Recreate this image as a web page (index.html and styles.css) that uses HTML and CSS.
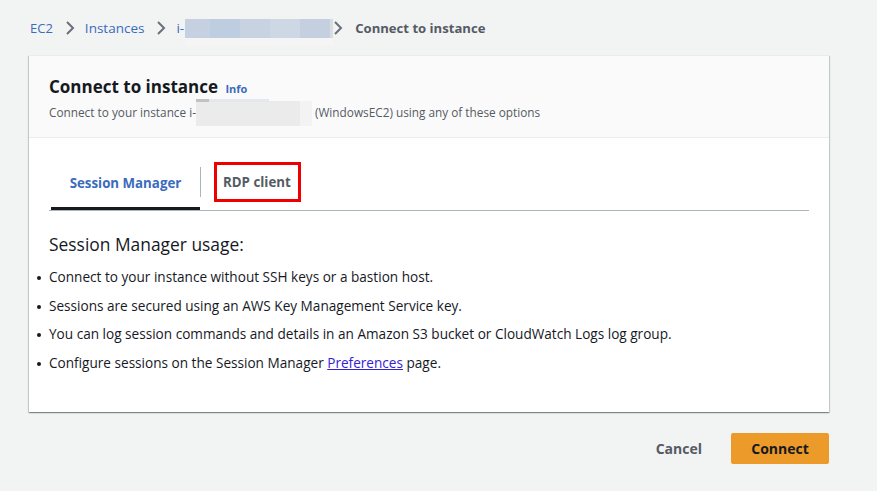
FILE: index.html
```html
<!DOCTYPE html>
<html lang="en">
<head>
<meta charset="utf-8">
<title>Connect to instance</title>
<link rel="stylesheet" href="styles.css">
</head>
<body>
<nav class="crumbs">
  <a class="crumb-link crumb-ec2" href="#">EC2</a>
  <svg class="chev" viewBox="0 0 10 16" width="10" height="16"><path d="M2 2l6 6-6 6" fill="none" stroke="#687078" stroke-width="2"/></svg>
  <a class="crumb-link" href="#">Instances</a>
  <svg class="chev" viewBox="0 0 10 16" width="10" height="16"><path d="M2 2l6 6-6 6" fill="none" stroke="#687078" stroke-width="2"/></svg>
  <span class="crumb-id"><a class="crumb-link" href="#">i-</a><span class="blur-wrap"><span class="blur-id"><i class="c1"></i><i class="c2"></i><i class="c3"></i><i class="c4"></i><i class="c5"></i><i class="c6"></i></span><span class="blur-under"></span></span></span>
  <svg class="chev chev-last" viewBox="0 0 10 16" width="10" height="16"><path d="M2 2l6 6-6 6" fill="none" stroke="#687078" stroke-width="2"/></svg>
  <span class="crumb-current">Connect to instance</span>
</nav>

<main class="card">
  <header class="card-head">
    <h1 class="title">Connect to instance <a class="info" href="#">Info</a></h1>
    <p class="subtitle">Connect to your instance i-<span class="blur-sub"><span class="blur-sub-top"></span><span class="blur-sub-end"></span></span>(WindowsEC2) using any of these options</p>
  </header>
  <section class="card-body">
    <div class="tabs">
      <div class="tab tab-active">Session Manager</div>
      <div class="tab-sep"></div>
      <div class="tab tab-rdp"><span class="highlight">RDP client</span></div>
    </div>
    <h2 class="usage">Session Manager usage:</h2>
    <ul class="list">
      <li>Connect to your instance without SSH keys or a bastion host.</li>
      <li>Sessions are secured using an AWS Key Management Service key.</li>
      <li>You can log session commands and details in an Amazon S3 bucket or CloudWatch Logs log group.</li>
      <li>Configure sessions on the Session Manager <a class="pref" href="#">Preferences</a> page.</li>
    </ul>
  </section>
</main>

<footer class="actions">
  <button class="btn-cancel">Cancel</button>
  <button class="btn-connect">Connect</button>
</footer>
</body>
</html>
```
FILE: styles.css
```css
* { box-sizing: border-box; }
html, body { margin: 0; padding: 0; }
body {
  background: #f2f3f3;
  font-family: "Open Sans", "Noto Sans", sans-serif;
  color: #16191f;
  width: 877px;
  height: 491px;
  overflow: hidden;
}
a { text-decoration: none; }

.crumbs {
  display: flex;
  align-items: center;
  height: 55px;
  padding: 1px 0 0 30px;
  font-size: 13.5px;
}
.crumb-link { color: #3a6bbd; }
.crumb-ec2 { font-size: 13px; }
.chev { margin: 0 10px 0 12px; }
.chev-last { margin: 0 12px 0 0; }
.crumb-id { display: flex; align-items: center; }
.blur-wrap { position: relative; width: 148px; height: 19px; margin-left: 1px; }
.blur-id { display: flex; width: 148px; height: 19px; }
.blur-id i { display: block; height: 100%; }
.c1 { width: 25px; background: #c5d0e0; }
.c2 { width: 30px; background: #bfcde0; }
.c3 { width: 30px; background: #c8d3e2; }
.c4 { width: 30px; background: #ced8e5; }
.c5 { width: 30px; background: #c4cfe0; }
.c6 { width: 3px; background: #d9dde2; }
.blur-under { position: absolute; left: 0; top: 19px; width: 148px; height: 8px; background: #f5f5f5; }
.crumb-current { color: #545b64; font-weight: 700; font-size: 13.1px; }

.card {
  margin: 0 0 0 29px;
  width: 800px;
  height: 357px;
  background: #fff;
  border-top: 1px solid #e9ebed;
  box-shadow: 0 1px 1px 0 rgba(0,28,36,.3), 1px 1px 1px 0 rgba(0,28,36,.15), -1px 1px 1px 0 rgba(0,28,36,.15);
}
.card-head {
  background: #fafafa;
  border-bottom: 1px solid #eaeded;
  height: 82px;
  padding: 18px 20px 0 20px;
}
.title {
  margin: 0;
  font-size: 17px;
  font-weight: 700;
  line-height: 26px;
  color: #16191f;
}
.info {
  font-size: 11px;
  font-weight: 700;
  color: #3a6bbd;
  margin-left: 3px;
}
.subtitle {
  margin: 1px 0 0 0;
  font-size: 11.8px;
  line-height: 18px;
  color: #545b64;
}
.blur-sub {
  display: inline-block;
  position: relative;
  vertical-align: middle;
  width: 104px;
  height: 25px;
  margin: -4px 15px -3px 0;
  background: #ebebeb;
}
.blur-sub-top {
  position: absolute;
  left: 0; top: -2px;
  width: 73px; height: 3px;
  background: linear-gradient(90deg, #c2c2c2 0 13px, #e4e7ec 13px);
}
.blur-sub-end {
  position: absolute;
  right: -12px; top: 0;
  width: 12px; height: 25px;
  background: #f3f3f3;
}

.card-body { padding: 22px 20px 0 20px; }
.tabs {
  display: flex;
  align-items: center;
  height: 51px;
  border-bottom: 1px solid #aab7b8;
}
.tab {
  font-size: 13.3px;
  font-weight: 700;
  height: 50px;
  display: flex;
  align-items: center;
  align-self: flex-start;
}
.tab-active {
  color: #3a6bbd;
  margin-left: 2px;
  width: 149px;
  justify-content: center;
  border-bottom: 3px solid #16191f;
  padding-bottom: 2px;
}
.tab-sep { width: 1px; height: 30px; background: #aab7b8; margin-bottom: 6px; }
.tab-rdp { color: #545b64; margin-left: 13px; padding-bottom: 6px; }
.highlight {
  display: flex;
  align-items: center;
  border: 3px solid #ee0000;
  height: 40px;
  padding: 0 7px 0 6px;
}

.usage {
  margin: 21px 0 0 0;
  font-size: 17.4px;
  font-weight: 400;
  line-height: 24px;
}
.list {
  margin: 11px 0 0 0;
  padding: 0;
  list-style: none;
  font-size: 13.6px;
}
.list li {
  position: relative;
  line-height: 20px;
  margin-bottom: 8.5px;
}
.list li::before {
  content: "";
  position: absolute;
  left: -12px;
  top: 9px;
  width: 4px;
  height: 4px;
  border-radius: 50%;
  background: #16191f;
}
.pref { color: #3322d6; text-decoration: underline; }

.actions {
  display: flex;
  justify-content: flex-end;
  align-items: center;
  width: 829px;
  margin-top: 21px;
}
.btn-cancel {
  font-family: inherit;
  background: none;
  border: 0;
  font-size: 14px;
  font-weight: 700;
  color: #545b64;
  padding: 0;
  margin-right: 29px;
}
.btn-connect {
  font-family: inherit;
  background: #ec9a29;
  border: 0;
  border-radius: 2px;
  width: 98px;
  height: 31px;
  font-size: 14px;
  font-weight: 700;
  color: #16191f;
}
```
